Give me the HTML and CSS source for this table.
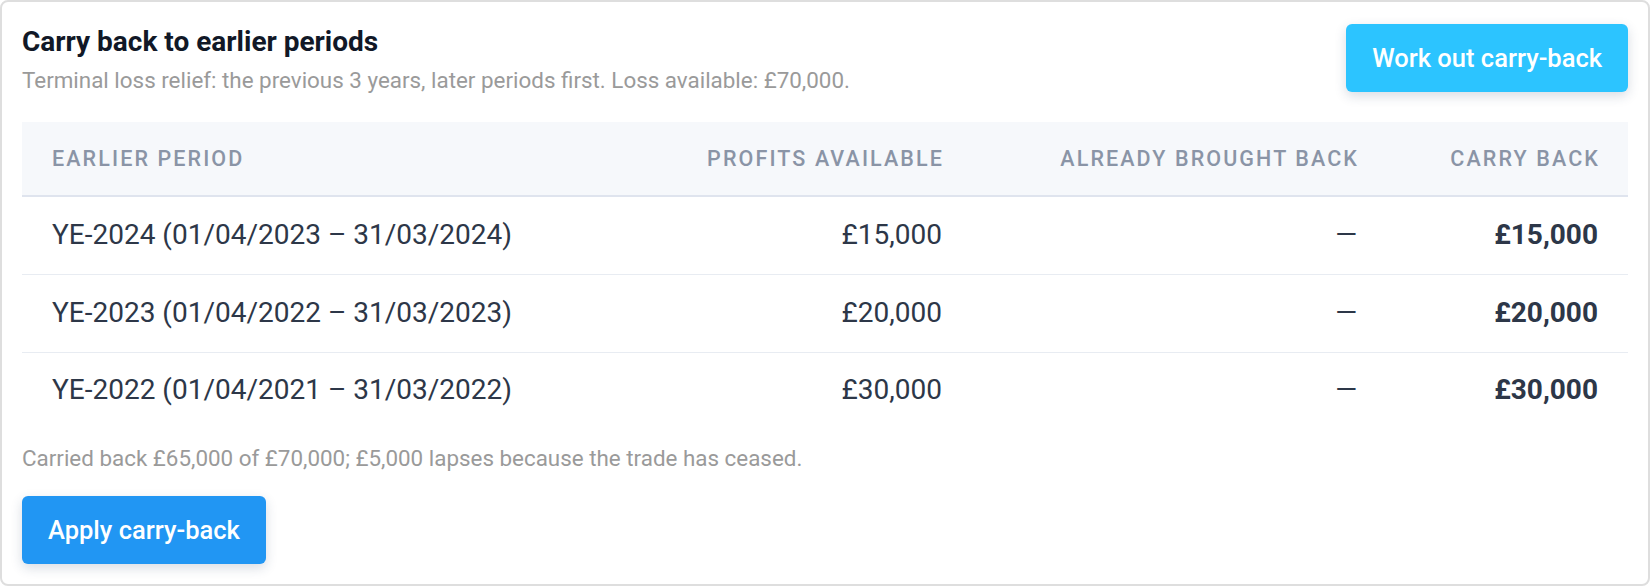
FILE: index.html
```html
<!DOCTYPE html>
<html lang="en">
<head>
<meta charset="utf-8">
<title>Carry back</title>
<link rel="stylesheet" href="styles.css">
</head>
<body>
<section class="card">
  <header class="card-head">
    <div class="head-text">
      <h2 class="title">Carry back to earlier periods</h2>
      <p class="subtitle">Terminal loss relief: the previous 3 years, later periods first. Loss available: £70,000.</p>
    </div>
    <button class="btn btn-work">Work out carry-back</button>
  </header>
  <table class="grid">
    <colgroup>
      <col class="c-period">
      <col class="c-profits">
      <col class="c-already">
      <col class="c-carry">
    </colgroup>
    <thead>
      <tr>
        <th class="left">Earlier period</th>
        <th class="right">Profits available</th>
        <th class="right">Already brought back</th>
        <th class="right">Carry back</th>
      </tr>
    </thead>
    <tbody>
      <tr>
        <td class="left">YE-2024 (01/04/2023 – 31/03/2024)</td>
        <td class="right">£15,000</td>
        <td class="right">—</td>
        <td class="right strong">£15,000</td>
      </tr>
      <tr>
        <td class="left">YE-2023 (01/04/2022 – 31/03/2023)</td>
        <td class="right">£20,000</td>
        <td class="right">—</td>
        <td class="right strong">£20,000</td>
      </tr>
      <tr>
        <td class="left">YE-2022 (01/04/2021 – 31/03/2022)</td>
        <td class="right">£30,000</td>
        <td class="right">—</td>
        <td class="right strong">£30,000</td>
      </tr>
    </tbody>
  </table>
  <p class="note">Carried back £65,000 of £70,000; £5,000 lapses because the trade has ceased.</p>
  <button class="btn btn-apply">Apply carry-back</button>
</section>
</body>
</html>
```

FILE: styles.css
```css
* { box-sizing: border-box; }
html, body { margin: 0; padding: 0; background: #ffffff; }
body { font-family: Roboto, "Liberation Sans", Arial, sans-serif; color: #2d3748; }

.card {
  width: 1650px;
  height: 586px;
  border: 2px solid #dedede;
  border-radius: 8px;
  padding: 20px;
  display: flex;
  flex-direction: column;
  align-items: flex-start;
}

.card-head {
  width: 100%;
  display: flex;
  justify-content: space-between;
  align-items: flex-start;
}

.title {
  margin: 3px 0 0 0;
  font-size: 28px;
  line-height: 34px;
  font-weight: 700;
  color: #111827;
}

.subtitle {
  margin: 7px 0 0 0;
  font-size: 22.4px;
  line-height: 28px;
  color: #9a9a9a;
}

.btn {
  font-family: Roboto, "Liberation Sans", Arial, sans-serif;
  font-size: 25.5px;
  font-weight: 500;
  color: #ffffff;
  border: none;
  border-radius: 6px;
  height: 68px;
  padding: 0 26px;
  box-shadow: 0 4px 12px rgba(40, 60, 100, 0.18);
}

.btn-work {
  margin-top: 2px;
  background: #2cc4ff;
}

.btn-apply {
  background: #2196f3;
  margin-top: 24px;
}

.grid {
  width: 100%;
  margin-top: 28px;
  border-collapse: collapse;
  table-layout: fixed;
}

.c-period { width: 580px; }
.c-profits { width: 370px; }
.c-already { width: 415px; }
.c-carry { width: 241px; }

.grid th {
  height: 74px;
  background: #f6f8fb;
  border-bottom: 2px solid #dfe4ee;
  font-size: 21.5px;
  font-weight: 500;
  letter-spacing: 2.1px;
  text-transform: uppercase;
  color: #8a94a6;
  padding: 0 30px;
  white-space: nowrap;
}

.grid th.right { padding-right: 28px; }

.grid td {
  height: 78px;
  font-size: 28px;
  padding: 0 30px 2px 30px;
  border-bottom: 1px solid #e8ecf2;
  white-space: nowrap;
}

.grid tbody tr:last-child td { border-bottom: none; height: 77px; }

.left { text-align: left; }
.right { text-align: right; }
.strong { font-weight: 700; }

.note {
  margin: 15px 0 0 0;
  font-size: 22.4px;
  line-height: 28px;
  color: #9a9a9a;
}
```
